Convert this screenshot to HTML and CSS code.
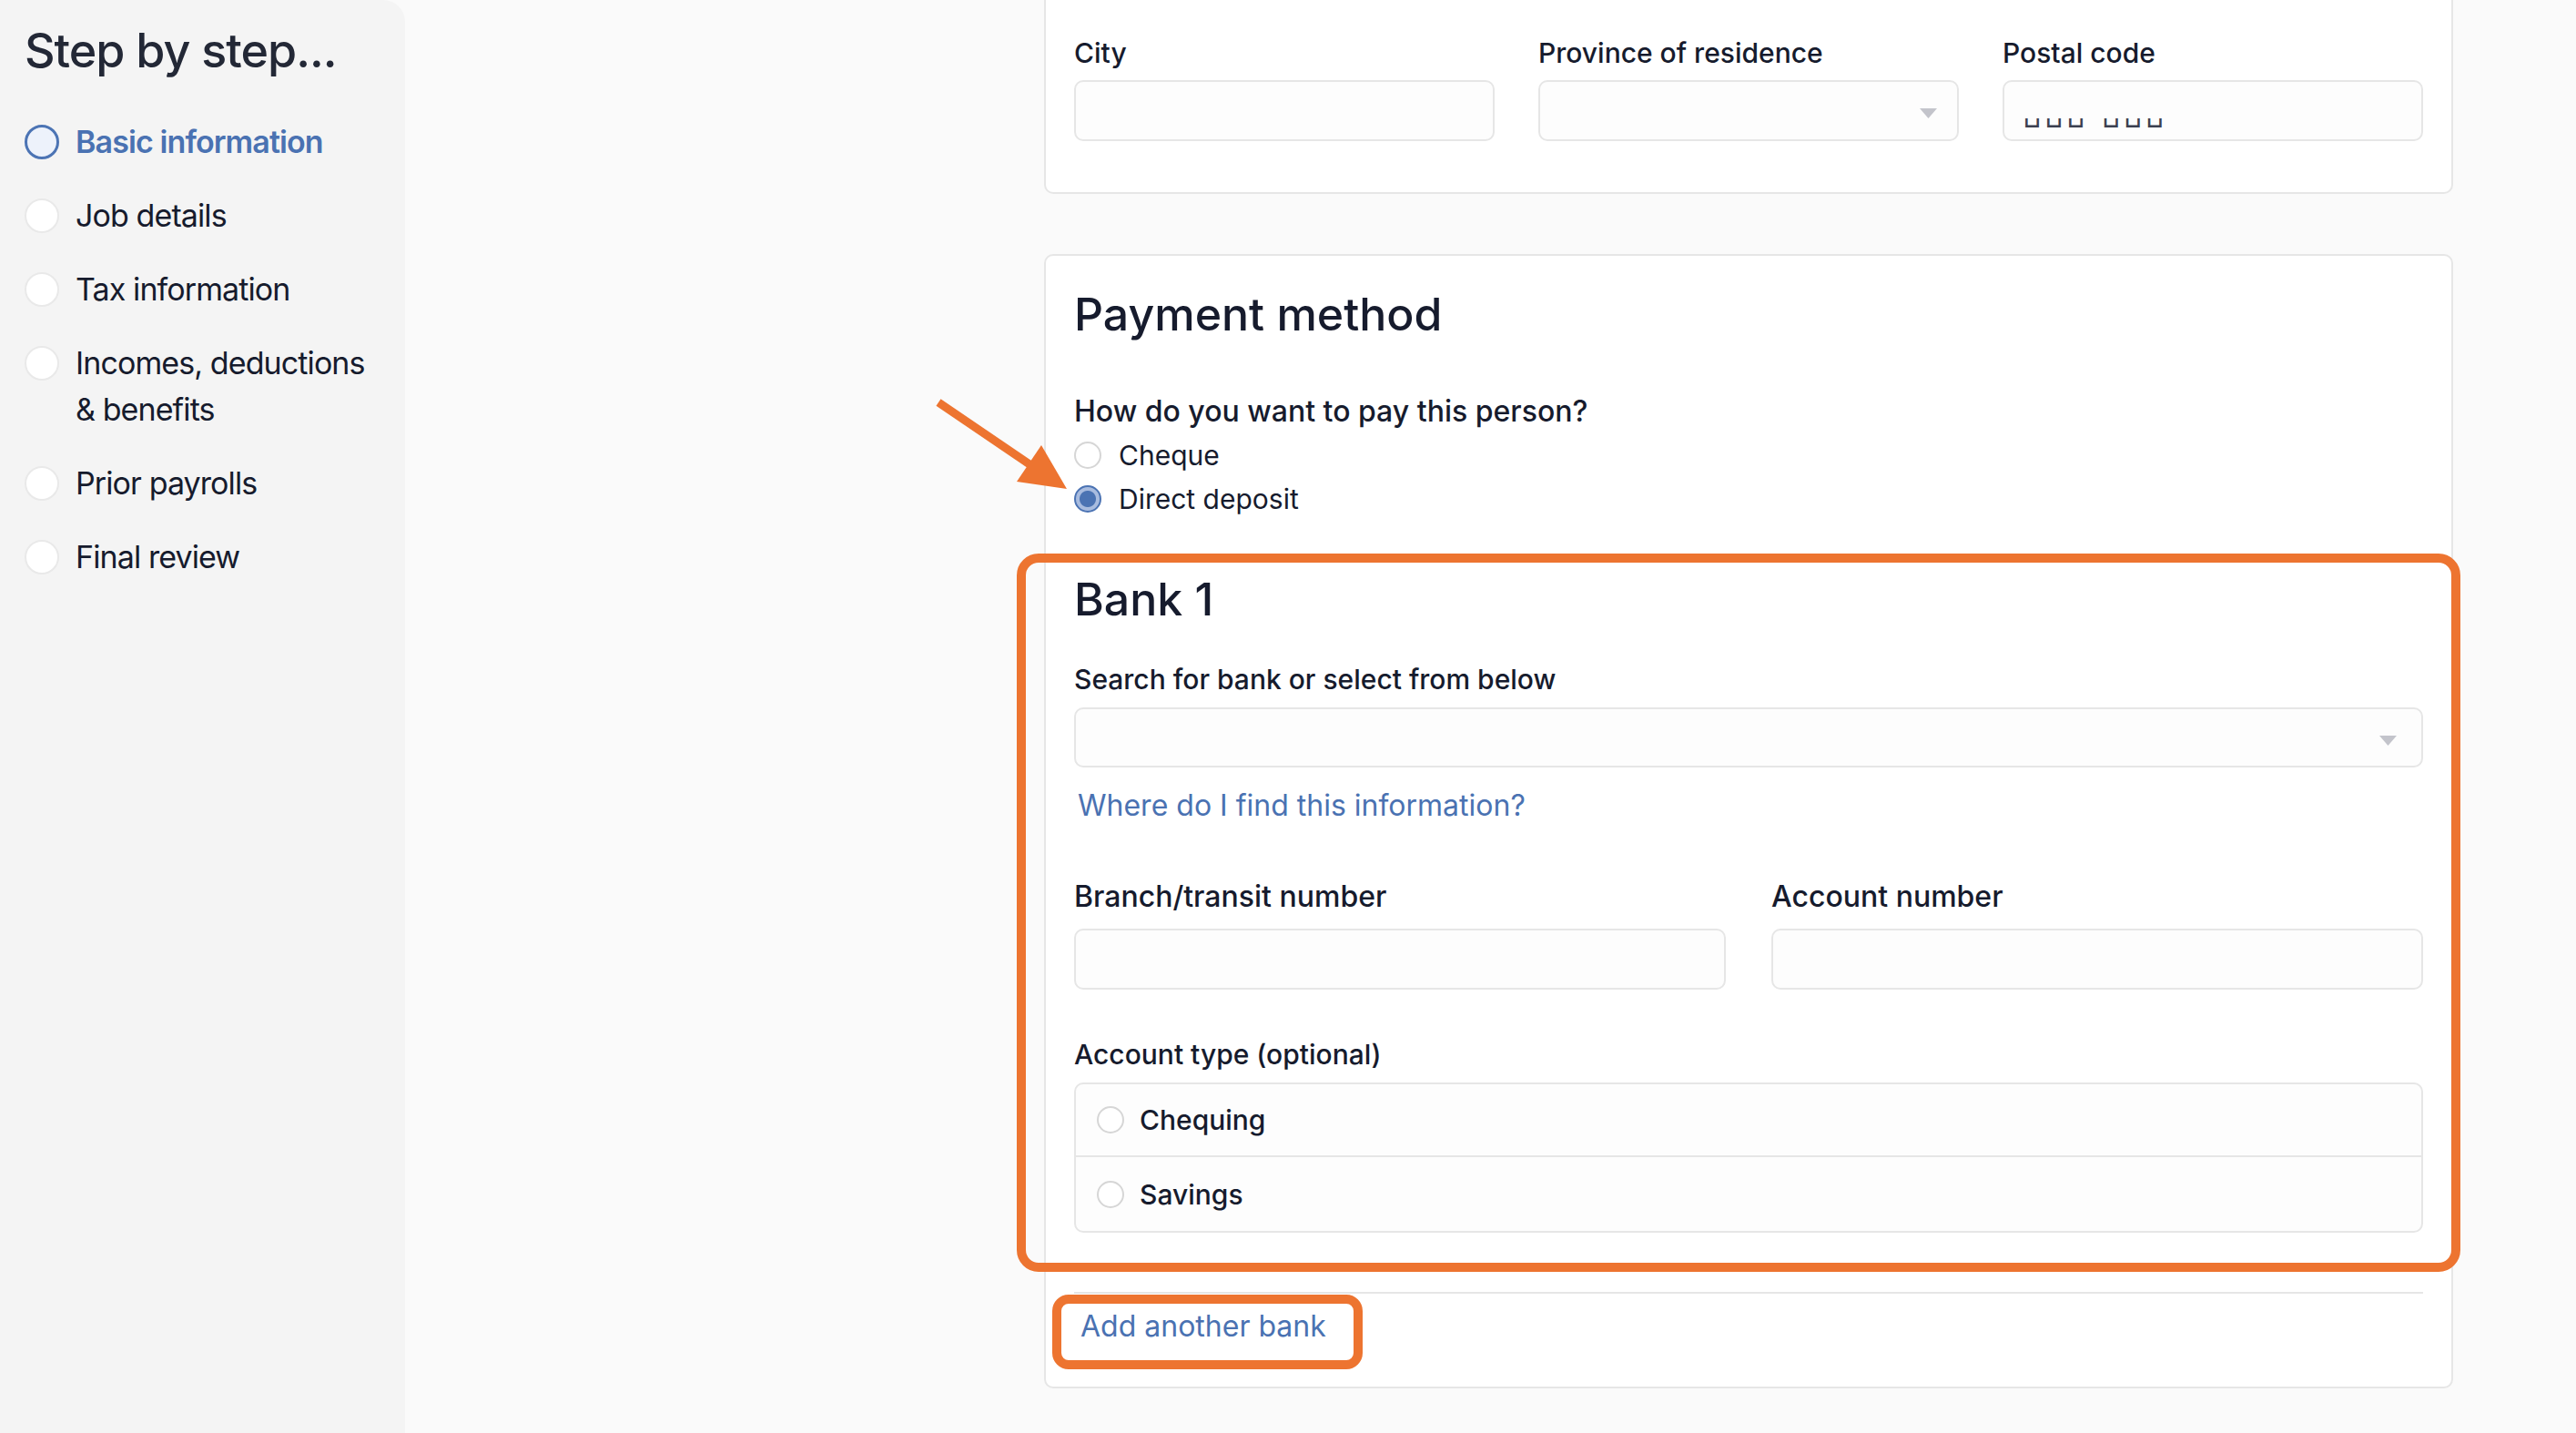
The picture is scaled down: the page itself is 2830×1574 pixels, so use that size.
FILE: index.html
```html
<!DOCTYPE html>
<html lang="en">
<head>
<meta charset="utf-8">
<title>Payment method</title>
<link rel="stylesheet" href="styles.css">
</head>
<body>
<div class="page">
  <aside class="sidebar">
    <h1 class="side-title">Step by step...</h1>
    <ul class="steps">
      <li class="step active"><span class="dot"></span><span class="step-text">Basic information</span></li>
      <li class="step"><span class="dot"></span><span class="step-text">Job details</span></li>
      <li class="step"><span class="dot"></span><span class="step-text">Tax information</span></li>
      <li class="step"><span class="dot"></span><span class="step-text">Incomes, deductions &amp; benefits</span></li>
      <li class="step"><span class="dot"></span><span class="step-text">Prior payrolls</span></li>
      <li class="step"><span class="dot"></span><span class="step-text">Final review</span></li>
    </ul>
  </aside>

  <main class="main">
    <section class="card card-top">
      <div class="grid3">
        <div class="field">
          <label class="label">City</label>
          <div class="input"></div>
        </div>
        <div class="field">
          <label class="label">Province of residence</label>
          <div class="input select">
            <svg class="caret" width="19" height="11" viewBox="0 0 19 11"><polygon points="0,0 19,0 9.5,11" fill="#c3c4cb"/></svg>
          </div>
        </div>
        <div class="field">
          <label class="label">Postal code</label>
          <div class="input"><span class="placeholder">␣␣␣ ␣␣␣</span></div>
        </div>
      </div>
    </section>

    <section class="card card-pay">
      <svg class="arrow" width="160" height="110" viewBox="0 0 160 110">
        <line x1="9" y1="10" x2="112" y2="80" stroke="#ed7430" stroke-width="9"/>
        <polygon points="150,105 122,57 95,97" fill="#ed7430"/>
      </svg>
      <h2 class="heading">Payment method</h2>
      <p class="question">How do you want to pay this person?</p>
      <div class="choices">
        <div class="choice"><span class="radio"></span><span>Cheque</span></div>
        <div class="choice"><span class="radio checked"></span><span>Direct deposit</span></div>
      </div>

      <div class="bank">
        <h2 class="heading">Bank 1</h2>
        <label class="label bank-label">Search for bank or select from below</label>
        <div class="input select bank-select">
          <svg class="caret" width="19" height="11" viewBox="0 0 19 11"><polygon points="0,0 19,0 9.5,11" fill="#c3c4cb"/></svg>
        </div>
        <a class="link info-link">Where do I find this information?</a>

        <div class="grid2">
          <div class="field">
            <label class="label label-lg">Branch/transit number</label>
            <div class="input tall-gap"></div>
          </div>
          <div class="field">
            <label class="label label-lg">Account number</label>
            <div class="input tall-gap"></div>
          </div>
        </div>

        <label class="label type-label">Account type (optional)</label>
        <div class="radio-group">
          <div class="group-row first"><span class="radio"></span><span>Chequing</span></div>
          <div class="group-row"><span class="radio"></span><span>Savings</span></div>
        </div>
      </div>

      <hr class="divider">
      <a class="link add-bank">Add another bank</a>
    </section>
  </main>
</div>
</body>
</html>
```

FILE: styles.css
```css
* { box-sizing: border-box; }

html, body {
  margin: 0;
  padding: 0;
}

body {
  background: #fafafa;
  font-family: Inter, "Liberation Sans", sans-serif;
  color: #161b2d;
  height: 1574px;
  overflow: hidden;
}

.page {
  display: flex;
  align-items: stretch;
  min-height: 1574px;
}

/* Sidebar */
.sidebar {
  width: 445px;
  flex: none;
  background: #f4f4f4;
  border-top-right-radius: 24px;
  padding: 24px 20px 0 27px;
}

.side-title {
  margin: 0;
  font-size: 52px;
  line-height: 63px;
  font-weight: 500;
  letter-spacing: -1px;
  color: #232836;
}

.steps {
  list-style: none;
  margin: 43px 0 0;
  padding: 0;
  display: flex;
  flex-direction: column;
  gap: 30px;
}

.step {
  display: flex;
  align-items: flex-start;
  gap: 18px;
  font-size: 34px;
  line-height: 51px;
  letter-spacing: -0.9px;
  color: #161b2d;
}

.step-text {
  max-width: 330px;
}

.dot {
  flex: none;
  width: 38px;
  height: 38px;
  margin-top: 6.5px;
  border-radius: 50%;
  background: #ffffff;
  border: 2px solid #e9e9e9;
}

.step.active .dot {
  background: #edf2fb;
  border: 3px solid #4c74b4;
}

.step.active .step-text {
  color: #4a72b2;
  font-weight: 600;
}

/* Main */
.main {
  flex: 1;
  padding-left: 702px;
}

.card {
  width: 1548px;
  background: #ffffff;
  border: 2px solid #e6e6e6;
  border-radius: 10px;
  padding: 34px 31px 29px;
}

.card-top {
  border-top: none;
  border-radius: 0 0 10px 10px;
  padding: 40px 31px 56px;
}

.card-pay {
  position: relative;
  margin-top: 66px;
}

.grid3 {
  display: grid;
  grid-template-columns: repeat(3, 1fr);
  gap: 48px;
}

.grid2 {
  display: grid;
  grid-template-columns: repeat(2, 1fr);
  gap: 50px;
  margin-top: 62px;
}

.field {
  display: flex;
  flex-direction: column;
}

.label {
  display: block;
  font-size: 30px;
  line-height: 36px;
  font-weight: 500;
  color: #161b2d;
}

.label-lg {
  font-size: 32px;
  line-height: 38px;
}

.input {
  margin-top: 12px;
  height: 67px;
  background: #fdfdfd;
  border: 2px solid #e6e6e6;
  border-radius: 10px;
  display: flex;
  align-items: center;
  padding: 0 21px;
}

.input.tall-gap {
  margin-top: 16px;
}

.select {
  justify-content: flex-end;
  padding-right: 22px;
}

.caret {
  display: block;
  margin-top: 6px;
}

.placeholder {
  font-family: "DejaVu Sans", sans-serif;
  font-size: 30px;
  line-height: 36px;
  color: #3b4050;
  letter-spacing: 5px;
  margin-top: 2px;
}

.heading {
  margin: 0;
  font-size: 50px;
  line-height: 60px;
  font-weight: 500;
  color: #161b2d;
}

.question {
  margin: 58px 0 0;
  font-size: 32px;
  line-height: 38px;
  font-weight: 500;
}

.choices {
  margin-top: 5px;
}

.choice {
  height: 48px;
  display: flex;
  align-items: center;
  gap: 19px;
  font-size: 30px;
}

.radio {
  flex: none;
  width: 30px;
  height: 30px;
  border-radius: 50%;
  background: #ffffff;
  border: 2px solid #d6d6d6;
}

.radio.checked {
  border: 2px solid #4b73b3;
  background: radial-gradient(circle, #4b73b3 0 8.5px, #a9bcdf 9.5px 13px);
}

/* Bank section with annotation box */
.bank {
  position: relative;
  margin-top: 56px;
}

.bank::after {
  content: "";
  position: absolute;
  top: -20px;
  left: -63px;
  right: -41px;
  bottom: -43px;
  border: 10px solid #ed7430;
  border-radius: 24px;
  pointer-events: none;
}

.bank-label {
  margin-top: 40px;
}

.bank-select {
  margin-top: 13px;
  height: 66px;
  padding-right: 27px;
}

.link {
  display: block;
  color: #4a72b2;
  font-size: 32px;
  line-height: 38px;
  font-weight: 400;
  text-decoration: none;
  cursor: pointer;
}

.info-link {
  margin-top: 23px;
  padding-left: 4px;
}

.type-label {
  margin-top: 53px;
}

.radio-group {
  margin-top: 13px;
  border: 2px solid #e6e6e6;
  border-radius: 10px;
  background: #fdfdfd;
}

.group-row {
  height: 81px;
  display: flex;
  align-items: center;
  gap: 17px;
  padding-left: 23px;
  font-size: 30px;
  font-weight: 500;
}

.group-row.first {
  height: 80px;
  border-bottom: 2px solid #e6e6e6;
}

.divider {
  margin: 65px 0 0;
  border: none;
  height: 2px;
  background: #e6e6e6;
}

.add-bank {
  display: inline-block;
  margin-top: 11px;
  margin-left: -14px;
  height: 62px;
  padding: 6px 30px 0 21px;
  border-radius: 8px;
  outline: 10px solid #ed7430;
  outline-offset: 0;
}

.arrow {
  position: absolute;
  left: -127px;
  top: 151px;
}
```
